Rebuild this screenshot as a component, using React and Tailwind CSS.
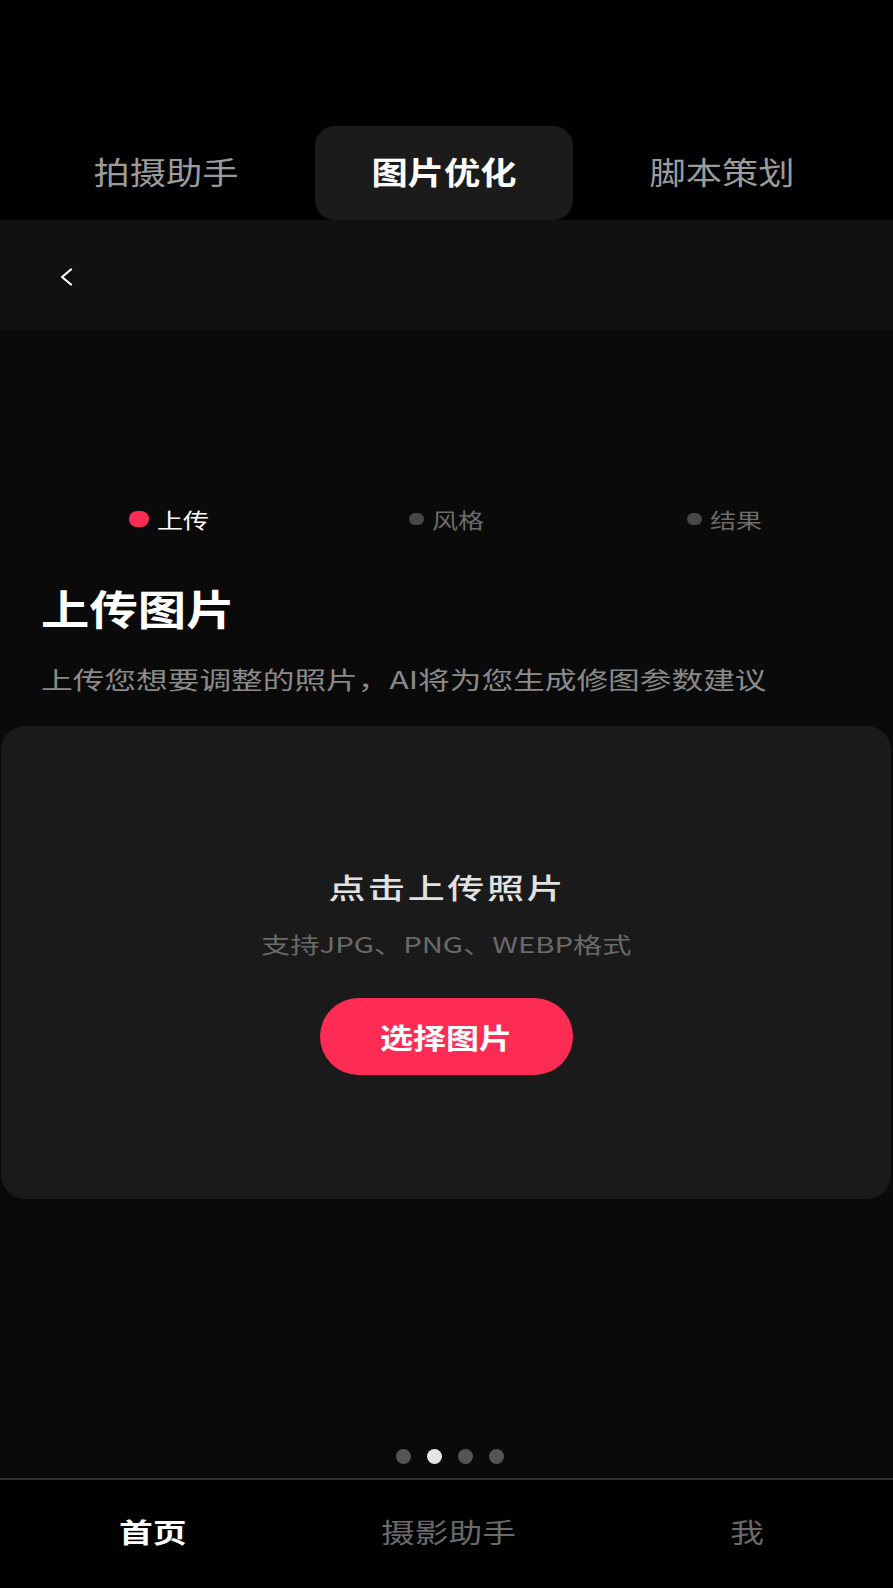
import { useState } from 'react';

const topTabs = ['拍摄助手', '图片优化', '脚本策划'];
const steps = ['上传', '风格', '结果'];
const bottomTabs = ['首页', '摄影助手', '我'];

function BackIcon() {
  return (
    <svg width="14" height="18" viewBox="0 0 14 18" fill="none">
      <polyline points="12,1.5 3,9 12,16.5" stroke="#ffffff" strokeWidth="2.2" strokeLinecap="round" strokeLinejoin="round" />
    </svg>
  );
}

export default function App() {
  const [tab] = useState(1);
  const [step] = useState(0);
  const [page] = useState(1);

  return (
    <div className="w-[893px] h-[1588px] bg-[#0a0a0a] flex flex-col overflow-hidden font-['Noto_Sans_CJK_SC','Noto_Sans',sans-serif]">
      {/* top tabs */}
      <header className="h-[220px] bg-black pt-[126px] pl-[37px] flex gap-[20px]">
        {topTabs.map((t, i) => (
          <div
            key={t}
            className={`w-[258px] h-[94px] pb-[5px] rounded-[20px] flex items-center justify-center ${i === tab ? 'bg-[#1b1b1b]' : ''}`}
          >
            <span
              className={`inline-block scale-x-[1.17] text-[31px] leading-none ${i === tab ? 'text-white font-bold' : 'text-[#9b9b9b]'}`}
            >
              {t}
            </span>
          </div>
        ))}
      </header>

      {/* nav bar */}
      <div className="h-[110px] bg-[#111111] flex items-center pl-[59px] pt-[3px]">
        <BackIcon />
      </div>

      <main className="flex-1 flex flex-col">
        {/* steps */}
        <div className="mt-[174px] h-[30px] pl-[37px] flex gap-[20px]">
          {steps.map((s, i) => (
            <div key={s} className="w-[258px] flex items-center justify-center gap-[13px]">
              {i === step ? (
                <span className="w-[20px] h-[16px] rounded-full bg-[#fe2c55]" />
              ) : (
                <span className="w-[15px] h-[12px] rounded-full bg-[#474747]" />
              )}
              <span className={`inline-block scale-x-[1.24] text-[21px] leading-none ${i === step ? 'text-white' : 'text-[#6b6b6b]'}`}>
                {s}
              </span>
            </div>
          ))}
        </div>

        <div className="pl-[41px]">
          <h1 className="mt-[53px] origin-left scale-x-[1.18] text-[41px] leading-none font-bold text-white">上传图片</h1>
          <p className="mt-[39px] origin-left scale-x-[1.32] text-[24px] leading-none text-[#8a8a8a] whitespace-nowrap">
            上传您想要调整的照片，AI将为您生成修图参数建议
          </p>
        </div>

        {/* upload card */}
        <div className="mt-[35px] ml-[1px] mr-[2px] h-[473px] rounded-[24px] bg-[#1a1a1a] flex flex-col items-center pt-[147px]">
          <span className="inline-block scale-x-[1.32] tracking-[2px] text-[28px] leading-none text-[#e2e2e2] font-medium pl-[2px]">
            点击上传照片
          </span>
          <span className="mt-[31px] inline-block scale-x-[1.33] text-[22px] leading-none text-[#6a6a6a] whitespace-nowrap">
            支持JPG、PNG、WEBP格式
          </span>
          <button className="mt-[44px] w-[253px] h-[77px] rounded-full bg-[#fe2c55] flex items-center justify-center">
            <span className="inline-block scale-x-[1.18] text-[28px] leading-none text-white font-semibold">选择图片</span>
          </button>
        </div>

        <div className="flex-1" />

        {/* pagination */}
        <div className="flex justify-center gap-[16px] pl-[6px] pb-[14px]">
          {[0, 1, 2, 3].map((d) => (
            <span key={d} className={`w-[15px] h-[15px] rounded-full ${d === page ? 'bg-[#e6e6e6]' : 'bg-[#555555]'}`} />
          ))}
        </div>
      </main>

      {/* bottom nav */}
      <nav className="h-[110px] bg-black border-t-2 border-[#2e2e2e] grid grid-cols-3">
        {bottomTabs.map((t, i) => (
          <div key={t} className="flex items-center justify-center pb-[5px]">
            <span className={`inline-block scale-x-[1.25] text-[27px] leading-none ${i === 0 ? 'text-white font-bold pl-[6px]' : 'text-[#6a6a6a] pl-[4px]'}`}>
              {t}
            </span>
          </div>
        ))}
      </nav>
    </div>
  );
}
